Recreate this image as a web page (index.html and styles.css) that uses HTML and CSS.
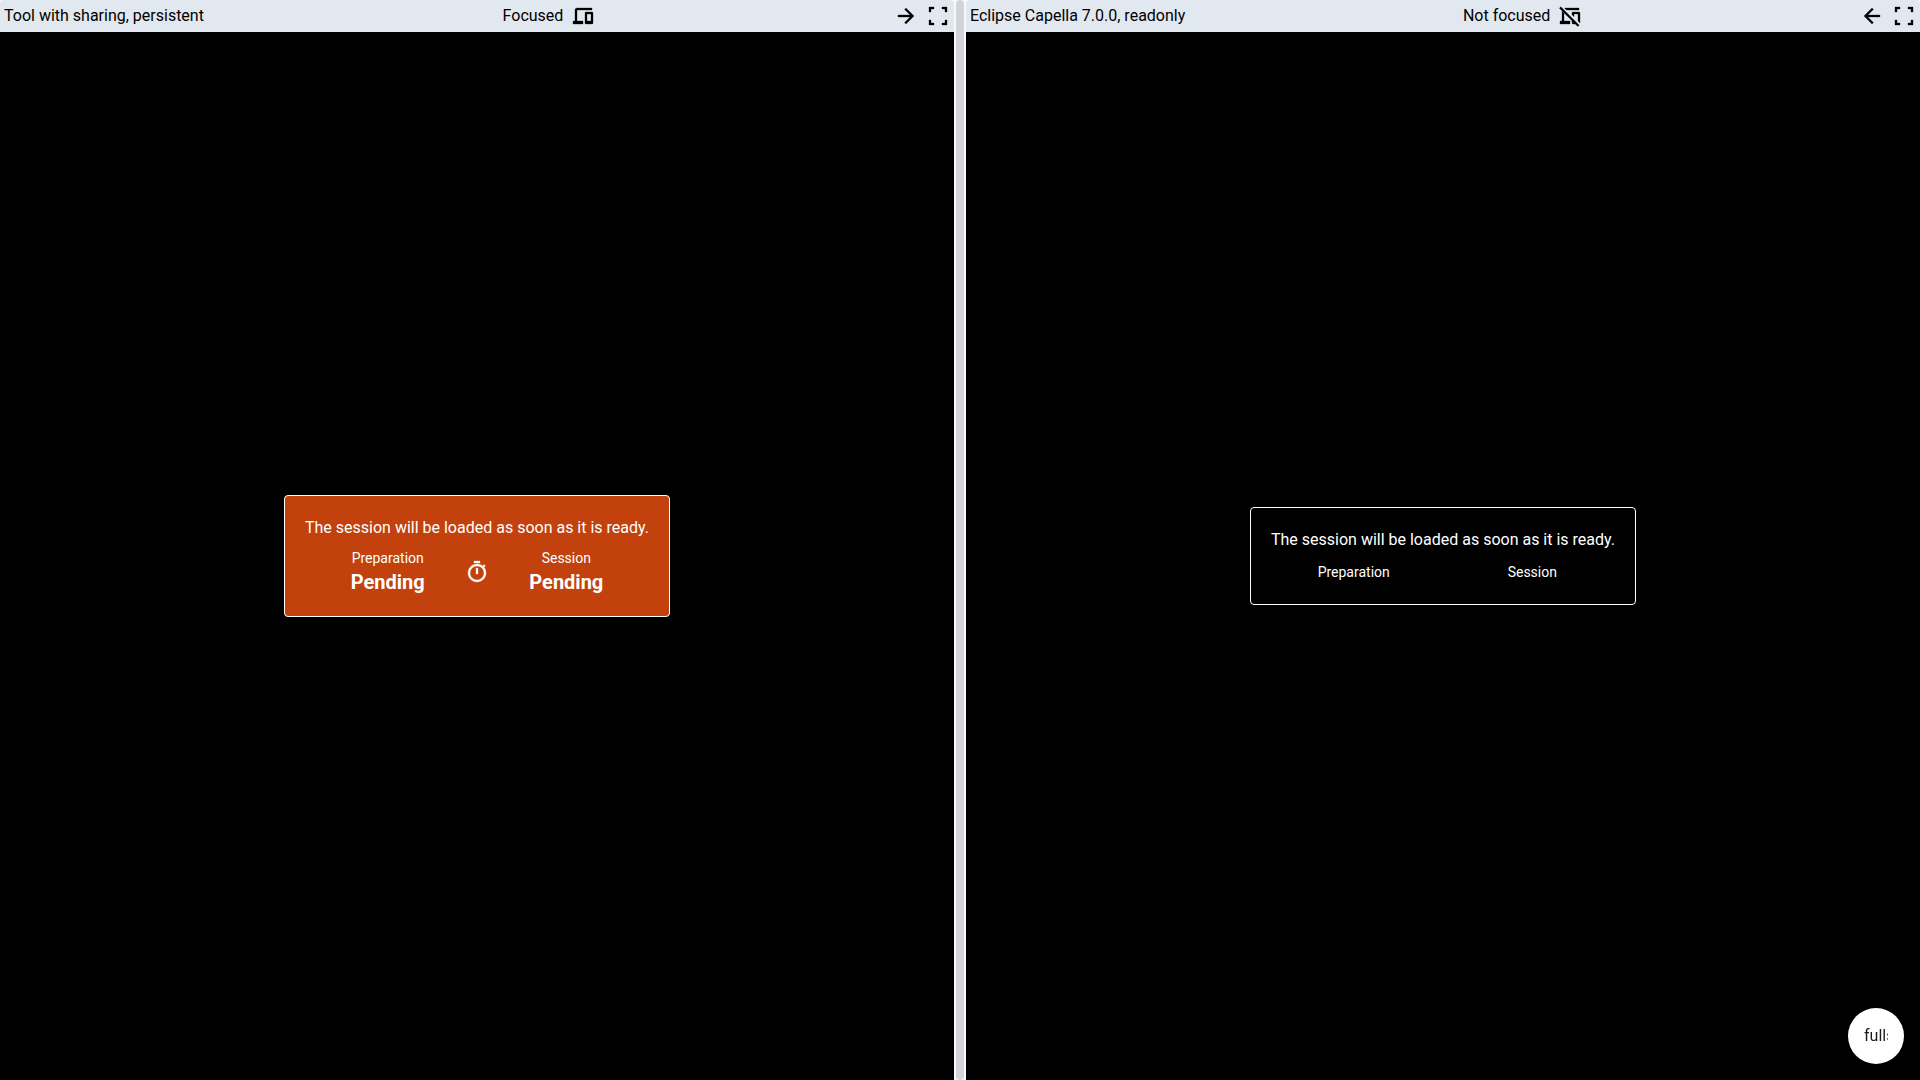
FILE: index.html
```html
<!DOCTYPE html>
<html lang="en">
<head>
<meta charset="utf-8">
<title>Sessions</title>
<link rel="stylesheet" href="styles.css">
</head>
<body>
<main class="viewer">
  <section class="session">
    <header class="bar">
      <span>Tool with sharing, persistent</span>
      <div class="group">
        <span>Focused</span>
        <svg class="icon" viewBox="0 0 24 24"><path d="M2 20v-3h2V6q0-.825.588-1.412T6 4h15v2H6v11h6v3zm13 0q-.425 0-.712-.288T14 19V9q0-.425.288-.712T15 8h6q.425 0 .713.288T22 9v10q0 .425-.287.713T21 20zm1-3h4v-7h-4z"/></svg>
      </div>
      <div class="group">
        <svg class="icon" viewBox="0 0 24 24"><path d="M16.175 13H4v-2h12.175l-5.6-5.6L12 4l8 8-8 8-1.425-1.4z"/></svg>
        <svg class="icon" viewBox="0 0 24 24"><path d="M3 21v-5h2v3h3v2zm13 0v-2h3v-3h2v5zM3 8V3h5v2H5v3zm16 0V5h-3V3h5v5z"/></svg>
      </div>
    </header>
    <div class="screen">
      <div class="card card-warning">
        <div>The session will be loaded as soon as it is ready.</div>
        <div class="states">
          <div class="state"><span class="label">Preparation</span><span class="value">Pending</span></div>
          <svg class="icon" viewBox="0 0 24 24"><path d="M9 3V1h6v2zm2 11h2V8h-2zm1 8q-1.850 0-3.488-.712T5.650 19.350t-1.937-2.862T3 13t.713-3.488T5.650 6.650t2.863-1.937T12 4q1.550 0 2.975.5t2.675 1.450l1.400-1.400 1.400 1.400-1.400 1.400Q20 8.600 20.500 10.025T21 13q0 1.850-.712 3.488T18.350 19.350t-2.862 1.938T12 22m0-2q2.900 0 4.950-2.050T19 13t-2.050-4.950T12 6 7.050 8.050 5 13t2.050 4.950T12 20"/></svg>
          <div class="state"><span class="label">Session</span><span class="value">Pending</span></div>
        </div>
      </div>
    </div>
  </section>
  <div class="gutter"><div class="handle"></div></div>
  <section class="session">
    <header class="bar">
      <span>Eclipse Capella 7.0.0, readonly</span>
      <div class="group">
        <span>Not focused</span>
        <svg class="icon" viewBox="0 0 24 24"><path d="M19.800 22.600 1.400 4.200 2.800 2.800 21.200 21.200zM2 20v-3h2V7.200l2 2V17h6v3zM22 19l-2-2v-7h-4v2.700l-2-2V9q0-.425.288-.712T15 8h6q.425 0 .713.288T22 9zM8.500 6l-2-2H21v2zM14 14.500l2 2V17h1l2 3h-4q-1 0-1-1z"/></svg>
      </div>
      <div class="group">
        <svg class="icon" viewBox="0 0 24 24"><path d="m7.825 13 5.600 5.600L12 20l-8-8 8-8 1.425 1.400-5.600 5.600H20v2z"/></svg>
        <svg class="icon" viewBox="0 0 24 24"><path d="M3 21v-5h2v3h3v2zm13 0v-2h3v-3h2v5zM3 8V3h5v2H5v3zm16 0V5h-3V3h5v5z"/></svg>
      </div>
    </header>
    <div class="screen">
      <div class="card">
        <div>The session will be loaded as soon as it is ready.</div>
        <div class="states">
          <div class="state"><span class="label">Preparation</span></div>
          <span class="icon"></span>
          <div class="state"><span class="label">Session</span></div>
        </div>
      </div>
    </div>
  </section>
</main>
<button class="fab"><span class="fab-label">fullscreen</span></button>
</body>
</html>
```
FILE: styles.css
```css
* { box-sizing: border-box; }
body {
  margin: 0;
  background: #f8fafc;
  color: #000;
  font: 16px/24px Roboto, sans-serif;
}
.viewer { display: flex; height: 100vh; }
.session { flex: 1; min-width: 0; display: flex; flex-direction: column; }
.bar {
  display: flex;
  align-items: center;
  justify-content: space-between;
  height: 32px;
  padding: 4px;
  background: #e2e8f0;
  border-radius: 4px 4px 0 0;
}
.group { display: flex; align-items: center; gap: 8px; }
.icon {
  display: block;
  flex: none;
  width: 24px;
  height: 24px;
  fill: currentColor;
  stroke: currentColor;
  stroke-width: 0.3px;
}
.screen {
  flex: 1;
  display: flex;
  align-items: center;
  justify-content: center;
  background: #000;
}
.card {
  width: 386px;
  padding: 20px 0;
  border: 1px solid #fff;
  border-radius: 4px;
  color: #fff;
  text-align: center;
}
.card-warning { background: #c2410c; }
.states {
  display: flex;
  align-items: center;
  justify-content: center;
  margin-top: 8px;
}
.state { display: flex; flex-direction: column; width: 154.6px; }
.label { font-size: 14px; line-height: 20px; }
.value { font-size: 20px; line-height: 28px; font-weight: 700; }
.gutter { width: 12px; padding: 0 2px; }
.handle { height: 100%; background: #d1d5db; border-radius: 4px; }
.fab {
  position: fixed;
  right: 16px;
  bottom: 16px;
  display: flex;
  align-items: center;
  justify-content: center;
  width: 56px;
  height: 56px;
  padding: 0;
  border: 0;
  border-radius: 50%;
  background: #fff;
  color: #1a1b1f;
  font: inherit;
  will-change: transform;
}
.fab-label { width: 24px; height: 24px; overflow: hidden; text-align: left; }
```
